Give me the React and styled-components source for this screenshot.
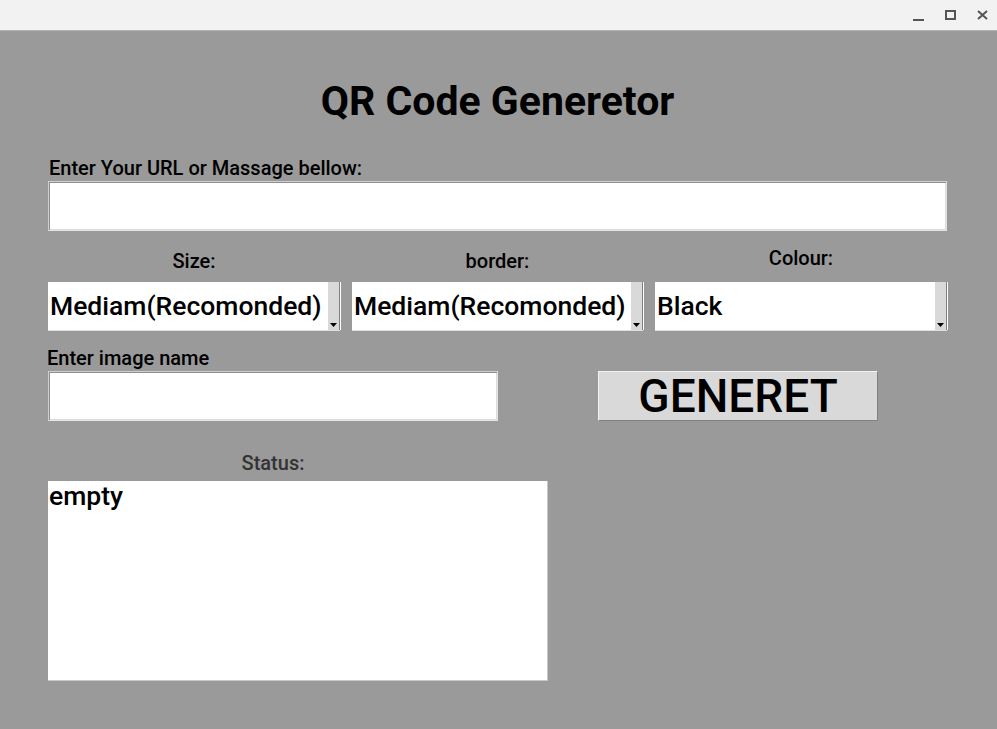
import React from "react";
import styled, { createGlobalStyle } from "styled-components";

const Global = createGlobalStyle`
  html, body { margin: 0; padding: 0; }
  body {
    width: 997px;
    height: 729px;
    overflow: hidden;
    background: #9a9a9a;
    font-family: Roboto, "Liberation Sans", sans-serif;
  }
`;

const Window = styled.div`
  width: 997px;
  height: 729px;
  display: flex;
  flex-direction: column;
  background: #9a9a9a;
`;

const TitleBar = styled.div`
  height: 30px;
  background: #f2f2f2;
  border-bottom: 1px solid #b4b4b4;
  display: flex;
  justify-content: flex-end;
  align-items: center;
  padding-right: 8px;
  gap: 18px;
`;

const WinButton = styled.div`
  width: 14px;
  height: 14px;
  display: flex;
  align-items: center;
  justify-content: center;
  svg { display: block; }
`;

const Main = styled.div`
  padding: 0 50px 0 48px;
  display: flex;
  flex-direction: column;
`;

const Title = styled.h1`
  margin: 40px 0 0;
  height: 60px;
  line-height: 60px;
  font-size: 41px;
  font-weight: 700;
  text-align: center;
  color: #000;
`;

const Label = styled.div`
  font-size: 20px;
  font-weight: 500;
  line-height: 24px;
  color: #000;
  margin-top: ${(p) => p.$top || 0}px;
  margin-left: ${(p) => p.$indent || 0}px;
  margin-bottom: ${(p) => p.$bottom || 0}px;
`;

const Entry = styled.div`
  box-sizing: border-box;
  height: 50px;
  width: 100%;
  background: #fff;
  border: 1px solid;
  border-color: #cfcfcf #e4e4e4 #e4e4e4 #cfcfcf;
  box-shadow: inset 1px 1px 0 #8e8e8e, inset -1px -1px 0 #dcdcdc;
`;

const ComboGrid = styled.div`
  display: grid;
  grid-template-columns: 292px 291px 292px;
  column-gap: 12px;
`;

const ComboLabel = styled.div`
  font-size: 20px;
  font-weight: 500;
  line-height: 24px;
  text-align: center;
  height: 51px;
  box-sizing: border-box;
  padding-top: ${(p) => p.$top}px;
  color: #000;
`;

const Combo = styled.div`
  box-sizing: border-box;
  height: 49px;
  background: #fff;
  border-bottom: 1px solid #dedede;
  display: flex;
  align-items: stretch;
`;

const ComboText = styled.div`
  flex: 1;
  font-size: 26.5px;
  font-weight: 500;
  line-height: 48px;
  padding-left: 2px;
  color: #000;
  white-space: nowrap;
  overflow: hidden;
`;

const ComboArrow = styled.div`
  width: 11px;
  background: #d9d9d9;
  border-right: 1px solid #808080;
  box-shadow: 1px 0 0 #ffffff;
  display: flex;
  align-items: flex-end;
  justify-content: center;
  padding-bottom: 3px;
  svg { display: block; }
`;

const NameRow = styled.div`
  display: flex;
  align-items: flex-end;
  margin-top: 15px;
`;

const NameCol = styled.div`
  width: 450px;
  display: flex;
  flex-direction: column;
`;

const GenButton = styled.button`
  box-sizing: border-box;
  margin-left: 100px;
  width: 280px;
  height: 50px;
  padding: 0;
  background: #d9d9d9;
  border: 1px solid;
  border-color: #f2f2f2 #808080 #808080 #f2f2f2;
  font-family: Roboto, "Liberation Sans", sans-serif;
  font-size: 46px;
  line-height: 48px;
  color: #000;
  font-weight: 500;
`;

const StatusLabel = styled.div`
  width: 450px;
  margin-top: 30px;
  font-size: 20px;
  font-weight: 500;
  line-height: 24px;
  text-align: center;
  color: #333;
`;

const StatusBox = styled.div`
  box-sizing: border-box;
  margin-top: 6px;
  width: 500px;
  height: 200px;
  background: #fff;
  border-right: 1px solid #c8c8c8;
  border-bottom: 1px solid #c8c8c8;
  font-size: 26.5px;
  font-weight: 500;
  line-height: 30px;
  padding-left: 1px;
  color: #000;
`;

const Arrow = () => (
  <svg width="7" height="4" viewBox="0 0 7 4">
    <polygon points="0,0 7,0 3.5,4" fill="#000" />
  </svg>
);

const combos = [
  { label: "Size:", value: "Mediam(Recomonded)", top: 18 },
  { label: "border:", value: "Mediam(Recomonded)", top: 18 },
  { label: "Colour:", value: "Black", top: 15 },
];

export default function App() {
  return (
    <>
      <Global />
      <Window>
        <TitleBar>
          <WinButton>
            <svg width="11" height="14" viewBox="0 0 11 14">
              <rect x="0" y="11" width="11" height="2" fill="#555" />
            </svg>
          </WinButton>
          <WinButton>
            <svg width="11" height="10" viewBox="0 0 11 10">
              <rect x="1" y="1" width="9" height="8" fill="none" stroke="#555" strokeWidth="2" />
            </svg>
          </WinButton>
          <WinButton>
            <svg width="11" height="10" viewBox="0 0 11 10">
              <path d="M1 1 L10 9 M10 1 L1 9" stroke="#555" strokeWidth="2" />
            </svg>
          </WinButton>
        </TitleBar>
        <Main>
          <Title>QR Code Generetor</Title>
          <Label $top={25} $indent={1} $bottom={1}>Enter Your URL or Massage bellow:</Label>
          <Entry />
          <ComboGrid>
            {combos.map((c) => (
              <ComboLabel key={c.label} $top={c.top}>{c.label}</ComboLabel>
            ))}
            {combos.map((c, i) => (
              <Combo key={i}>
                <ComboText>{c.value}</ComboText>
                <ComboArrow>
                  <Arrow />
                </ComboArrow>
              </Combo>
            ))}
          </ComboGrid>
          <NameRow>
            <NameCol>
              <Label $indent={-1} $bottom={1}>Enter image name</Label>
              <Entry />
            </NameCol>
            <GenButton>GENERET</GenButton>
          </NameRow>
          <StatusLabel>Status:</StatusLabel>
          <StatusBox>empty</StatusBox>
        </Main>
      </Window>
    </>
  );
}
